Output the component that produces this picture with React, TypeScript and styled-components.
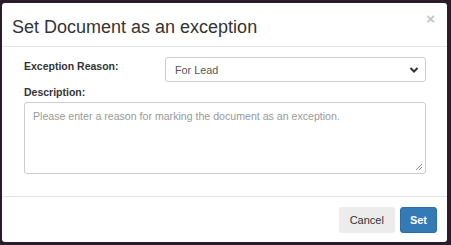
import styled, { createGlobalStyle } from "styled-components";

const GlobalStyle = createGlobalStyle`
  html, body {
    margin: 0;
    padding: 0;
    background: #2a1c2a;
  }
  body {
    font-family: "Liberation Sans", Arial, sans-serif;
  }
`;

const Page = styled.div`
  width: 451px;
  height: 245px;
  padding: 3px 4px 3px 2px;
  box-sizing: border-box;
`;

const Modal = styled.div`
  width: 445px;
  height: 239px;
  background: #fff;
  border-radius: 3px;
  display: flex;
  flex-direction: column;
  box-sizing: border-box;
`;

const Header = styled.div`
  height: 44px;
  display: flex;
  align-items: center;
  justify-content: space-between;
  padding: 0 12px 0 10px;
  border-bottom: 1px solid #e5e5e5;
  box-sizing: border-box;
`;

const Title = styled.h4`
  margin: 0;
  font-size: 18px;
  font-weight: 400;
  color: #333;
  padding-top: 6px;
`;

const Close = styled.span`
  font-size: 15px;
  font-weight: 700;
  color: #c4c4c4;
  align-self: flex-start;
  margin-top: 8px;
  line-height: 1;
`;

const Body = styled.div`
  flex: 1;
  padding: 10px 21px 0 22px;
  display: flex;
  flex-direction: column;
`;

const Row = styled.div`
  display: flex;
  align-items: flex-start;
`;

const Label = styled.label<{ $top?: number }>`
  font-size: 10.5px;
  font-weight: 700;
  color: #333;
  width: 141px;
  padding-top: ${(p) => p.$top ?? 0}px;
`;

const Select = styled.div`
  flex: 1;
  height: 25px;
  border: 1px solid #ccc;
  border-radius: 3px;
  box-sizing: border-box;
  display: flex;
  align-items: center;
  justify-content: space-between;
  padding: 0 6px 0 9px;
  font-size: 10.8px;
  color: #555;
`;

const TextArea = styled.div`
  margin-top: 4px;
  height: 72px;
  border: 1px solid #ccc;
  border-radius: 3px;
  box-sizing: border-box;
  padding: 7px 8px;
  font-size: 10.6px;
  color: #999;
  position: relative;
`;

const Grip = styled.svg`
  position: absolute;
  right: 2px;
  bottom: 2px;
`;

const Footer = styled.div`
  height: 46px;
  border-top: 1px solid #e5e5e5;
  display: flex;
  justify-content: flex-end;
  align-items: flex-start;
  gap: 5px;
  padding: 10px 10px 0 0;
  box-sizing: border-box;
`;

const Button = styled.button<{ $primary?: boolean }>`
  height: 26px;
  padding: 0 ${(p) => (p.$primary ? 9 : 10)}px;
  border-radius: 3px;
  border: 1px solid ${(p) => (p.$primary ? "#2e6da4" : "#ececec")};
  background: ${(p) => (p.$primary ? "#337ab7" : "#ececec")};
  color: ${(p) => (p.$primary ? "#fff" : "#333")};
  font-family: "Liberation Sans", Arial, sans-serif;
  font-size: 11px;
  font-weight: ${(p) => (p.$primary ? 700 : 400)};
`;

export default function App() {
  return (
    <Page>
      <GlobalStyle />
      <Modal>
        <Header>
          <Title>Set Document as an exception</Title>
          <Close>×</Close>
        </Header>
        <Body>
          <Row>
            <Label $top={3}>Exception Reason:</Label>
            <Select>
              <span>For Lead</span>
              <svg width="10" height="8" viewBox="0 0 10 8">
                <path d="M1.5 2 L5 5.5 L8.5 2" fill="none" stroke="#333" strokeWidth="2" />
              </svg>
            </Select>
          </Row>
          <Row>
            <Label $top={4}>Description:</Label>
          </Row>
          <TextArea>
            Please enter a reason for marking the document as an exception.
            <Grip width="9" height="9" viewBox="0 0 9 9">
              <path d="M8 2 L2 8 M8 5 L5 8" stroke="#888" strokeWidth="1" />
            </Grip>
          </TextArea>
        </Body>
        <Footer>
          <Button>Cancel</Button>
          <Button $primary>Set</Button>
        </Footer>
      </Modal>
    </Page>
  );
}
